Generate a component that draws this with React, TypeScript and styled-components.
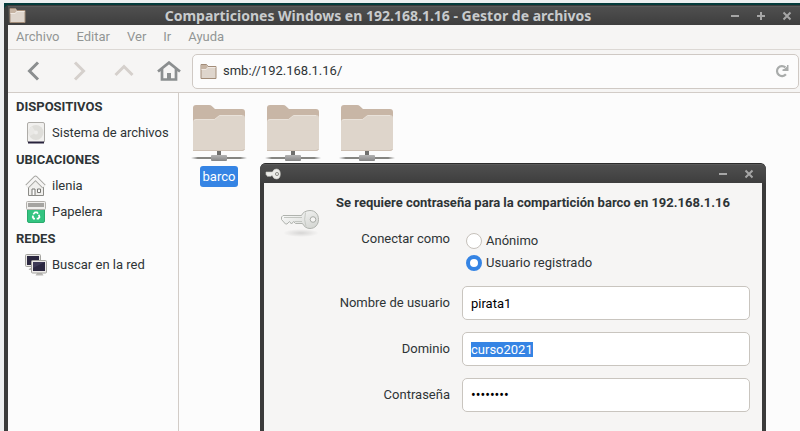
import React, { useEffect, useRef } from "react";
import styled, { createGlobalStyle } from "styled-components";

const GlobalStyle = createGlobalStyle`
  * { box-sizing: border-box; }
  html { background: #edeff0; }
  body {
    margin: 0;
    overflow: hidden;
    font-family: Roboto, "Noto Sans", sans-serif;
    font-size: 13px;
    line-height: 18px;
    color: #2e3436;
  }
  button, input { font: inherit; color: inherit; }
  svg { display: block; flex: none; }
  ::selection { background: #3584e4; color: #ffffff; }
`;

const Screen = styled.div`
  min-height: 100vh;
  display: flex;
  padding: 3px 0 0 4px;
`;

const Desktop = styled.div`
  position: relative;
  flex: 1;
  display: flex;
  padding-top: 2px;
  background: #043b3b;
`;

const FileWindow = styled.section`
  flex: 1;
  display: flex;
  flex-direction: column;
  background: #3b3b3b;
  border-left: 4px solid #3b3b3b;
  border-radius: 5px 0 0 0;
`;

const TitleBar = styled.header<{ $dialog?: boolean }>`
  display: grid;
  grid-template-columns: 24px 1fr 76px;
  align-items: center;
  height: 20px;
  padding: ${(p) => (p.$dialog ? "0 4px" : "0")};
  border-top: 1px solid ${(p) => (p.$dialog ? "#2c2c2c" : "#3a3a3a")};
  border-radius: ${(p) => (p.$dialog ? "5px 5px 0 0" : "0")};
  background: linear-gradient(#666666 0, #4f4f4f 1px, #3e3e3e 100%);
`;

const WindowTitle = styled.h1`
  margin: 0;
  text-align: center;
  white-space: nowrap;
  font: 700 14px/18px "Noto Sans", sans-serif;
  color: #c8cbcd;
`;

const WindowButtons = styled.div`
  grid-column: 3;
  display: flex;
  justify-content: flex-end;
`;

const FrameButton = styled.button`
  display: grid;
  flex: none;
  place-items: center;
  width: 26px;
  height: 18px;
  padding: 0;
  border: 0;
  background: none;
  color: #a6a6a6;
`;

const MenuBar = styled.nav`
  display: flex;
  align-items: center;
  gap: 1px;
  height: 25px;
  background: #f6f5f4;
  border-bottom: 1px solid #dcd8d4;
`;

const MenuButton = styled.button`
  padding: 0 8px;
  border: 0;
  background: none;
  color: #929595;
`;

const Toolbar = styled.div`
  display: flex;
  align-items: center;
  height: 43px;
  padding: 0 1px 0 3px;
  background: #f6f5f4;
  border-bottom: 1px solid #d2ccc7;
`;

const ToolButton = styled.button`
  display: grid;
  place-items: center;
  width: 45px;
  height: 34px;
  padding: 0;
  border: 0;
  background: none;
  color: #8b8e8f;
  &:disabled { color: #d5d0cc; }
`;

const PathBar = styled.div`
  flex: 1;
  display: flex;
  align-items: center;
  gap: 6px;
  height: 35px;
  margin-left: 1px;
  padding: 0 9px 0 7px;
  background: #fcfcfc;
  border: 1px solid #cfc9c4;
  border-radius: 5px;
`;

const PathInput = styled.input`
  flex: 1;
  min-width: 0;
  padding: 0;
  border: 0;
  outline: 0;
  background: none;
`;

const ReloadButton = styled.button`
  padding: 0;
  border: 0;
  background: none;
  color: #a9acab;
`;

const Panes = styled.div`
  flex: 1;
  display: grid;
  grid-template-columns: 171px 1fr;
  background: #fcfcfc;
`;

const Sidebar = styled.aside`
  border-right: 1px solid #d2ccc7;
`;

const GroupTitle = styled.h2`
  margin: 0;
  padding-left: 8px;
  font-size: 13px;
  font-weight: 700;
  line-height: 27px;
`;

const Place = styled.a`
  display: flex;
  align-items: center;
  gap: 5px;
  height: 26px;
  padding-left: 17px;
  white-space: nowrap;
  color: inherit;
  text-decoration: none;
`;

const Files = styled.main`
  display: flex;
  align-items: flex-start;
  padding: 11px 3px;
`;

const Share = styled.a`
  display: flex;
  flex-direction: column;
  align-items: center;
  gap: 4px;
  width: 74px;
  color: inherit;
  text-decoration: none;
`;

const ShareName = styled.span<{ $selected?: boolean }>`
  padding: 0 3px;
  border-radius: 3px;
  line-height: 21px;
  color: ${(p) => (p.$selected ? "#ffffff" : "inherit")};
  background: ${(p) => (p.$selected ? "#3584e4" : "transparent")};
`;

const Dialog = styled.section`
  position: absolute;
  top: 160px;
  right: 34px;
  bottom: 0;
  left: 256px;
  display: flex;
  flex-direction: column;
  overflow: hidden;
  background: #3b3b3b;
  border-radius: 6px 6px 0 0;
`;

const DialogBody = styled.form`
  flex: 1;
  display: flex;
  align-items: flex-start;
  gap: 16px;
  margin: 0 4px;
  padding: 11px 12px 12px 16px;
  background: #f6f5f4;
`;

const KeyPicture = styled.div`
  padding-top: 12px;
`;

const Fields = styled.div`
  flex: 1;
  display: grid;
  grid-template-columns: 114px 1fr;
  gap: 12px;
  align-items: center;
`;

const Question = styled.h2`
  grid-column: 1 / -1;
  margin: 0 0 6px;
  font-size: 13px;
  font-weight: 700;
  line-height: 18px;
  white-space: nowrap;
`;

const FieldLabel = styled.label`
  text-align: right;
  white-space: nowrap;
`;

const GroupLabel = styled.span`
  align-self: start;
  text-align: right;
`;

const Radios = styled.div`
  padding-left: 4px;
`;

const RadioLabel = styled.label`
  display: flex;
  align-items: center;
  gap: 4px;
  height: 22px;
`;

const Radio = styled.input`
  appearance: none;
  width: 16px;
  height: 16px;
  margin: 0;
  border: 1px solid #c6c1bb;
  border-radius: 50%;
  background: #ffffff;
  &:checked { border: 4px solid #3584e4; }
`;

const TextBox = styled.input`
  width: 100%;
  height: 34px;
  padding: 0 8px;
  border: 1px solid #c9c5bf;
  border-radius: 5px;
  outline: 0;
  background: #ffffff;
  color: #000000;
  &[type="password"] { font-size: 14px; }
`;

const Glyph = ({ d }: { d: string }) => (
  <svg width="10" height="10" viewBox="0 0 10 10" aria-hidden="true">
    <path d={d} fill="none" stroke="currentColor" strokeWidth="2" />
  </svg>
);
const MINUS = "M1 5H9";
const PLUS = "M1 5H9M5 1V9";
const CROSS = "M1.5 1.5L8.5 8.5M8.5 1.5L1.5 8.5";

const Chevron = ({ d }: { d: string }) => (
  <svg width="20" height="20" viewBox="0 0 20 20" aria-hidden="true">
    <path d={d} fill="none" stroke="currentColor" strokeWidth="3" />
  </svg>
);

const HomeGlyph = () => (
  <svg width="24" height="20" viewBox="0 0 24 20" aria-hidden="true">
    <path d="M1 10.5L12 1.6L23 10.5M5 8V18.5H19V8" fill="none" stroke="currentColor" strokeWidth="2.7" />
    <path d="M10 12H14V18H10Z" fill="currentColor" />
  </svg>
);

const ReloadGlyph = () => (
  <svg width="14" height="14" viewBox="0 0 14 14" aria-hidden="true">
    <path d="M10.9 10.2A5 5 0 1 1 10.4 3.4" fill="none" stroke="currentColor" strokeWidth="2.2" />
    <path d="M13.5 1V7H7.5V5.5L9.5 4.8L12 2.5V1Z" fill="currentColor" />
  </svg>
);

const SmallFolder = () => (
  <svg width="17" height="17" viewBox="0 0 17 17" aria-hidden="true">
    <path d="M1 15.5V1.5H6.5L8 3.5H16V15.5Z" fill="#ded5cc" stroke="#a28c78" />
    <path d="M1.5 2H6.3L7.5 4L6 6H1.5Z" fill="#c6b4a3" />
    <path d="M1.5 6.5H6.2L8 4.5H15.5" fill="none" stroke="#f0e9e2" />
  </svg>
);

const ShareFolder = () => (
  <svg width="58" height="58" viewBox="0 0 58 58" aria-hidden="true">
    <defs>
      <linearGradient id="net" x1="0" x2="1">
        <stop offset="0" stopColor="#8c8c8c" stopOpacity="0" />
        <stop offset=".12" stopColor="#858581" />
        <stop offset=".88" stopColor="#858581" />
        <stop offset="1" stopColor="#8c8c8c" stopOpacity="0" />
      </linearGradient>
      <linearGradient id="plug" x2="0" y2="1">
        <stop offset="0" stopColor="#b4b4b4" />
        <stop offset="1" stopColor="#858585" />
      </linearGradient>
    </defs>
    <path d="M3 46V4Q3 1 6 1H19Q21 1 22 2.2L25 5H52Q55 5 55 8V40Z" fill="#c8b6a6" />
    <path d="M3 47V18Q3 15 6 15H24Q25.500 15 26.500 14L29 11.700Q30 11 32 11H52Q55 11 55 14V44Q55 47 52 47Z" fill="#ded5cb" />
    <path d="M3 46.500H52Q54 46.500 54.500 45" fill="none" stroke="#cdc0b3" />
    <path d="M4 16.500L6 15.500H24.500L29.500 11.500H52" fill="none" stroke="#e9e2da" />
    <rect x="27" y="47" width="4" height="5" fill="#70706e" />
    <rect x="1" y="53" width="56" height="2" fill="url(#net)" />
    <rect x="21" y="51" width="16" height="6" rx="1" fill="url(#plug)" />
  </svg>
);

const DriveIcon = () => (
  <svg width="22" height="22" viewBox="0 0 22 22" aria-hidden="true">
    <rect x="2.5" y="0.5" width="17" height="20" rx="1.500" fill="#f1f0ee" stroke="#aeaca8" />
    <circle cx="11" cy="10.500" r="7.500" fill="#dfdeda" />
    <path d="M11 10.500L4.500 14.300A7.500 7.500 0 0 1 7 4.200Z" fill="#e9e8e5" />
    <circle cx="11" cy="10.500" r="2" fill="#eeedeb" />
    <path d="M3 19.500H19V21.500H3Z" fill="#28233c" />
  </svg>
);

const UserHomeIcon = () => (
  <svg width="22" height="22" viewBox="0 0 22 22" aria-hidden="true">
    <path d="M3.500 10V20.500H18.500V10L11 4Z" fill="#f0efed" stroke="#8b8b87" />
    <path d="M7 20V14H10V20M12.500 17.500V14H15.500V17.500Z" fill="#fff" stroke="#777773" />
    <path d="M2 11.500L10.500 3L19 11.500" fill="none" stroke="#a5a5a1" strokeWidth="4.600" strokeLinejoin="round" />
    <path d="M2 11.500L10.500 3L19 11.500" fill="none" stroke="#f6f5f4" strokeWidth="3" strokeLinejoin="round" />
  </svg>
);

const TrashIcon = () => (
  <svg width="22" height="22" viewBox="0 0 22 22" aria-hidden="true">
    <path d="M2.500 5H19.500V20Q19.500 21.500 18 21.500H4Q2.500 21.500 2.500 20Z" fill="#33c481" stroke="#2bab6d" />
    <rect x="1.500" y="0.500" width="19" height="8" rx="1" fill="#efeeec" stroke="#b2b0ac" />
    <rect x="3" y="2" width="16" height="4" fill="#a5a4a1" />
    <path d="M8.300 13.300L10 11.300H12L13 12.700M13.800 13.700L14.500 16L13.300 17.600H11.700M10 17.600H8.600L7.700 16L8.300 14.600" fill="none" stroke="#fff" strokeWidth="1.700" />
  </svg>
);

const NetworkIcon = () => (
  <svg width="22" height="22" viewBox="0 0 22 22" aria-hidden="true">
    <path d="M5 14H10V16H3.500Z" fill="#b9b8b5" />
    <rect x="0.500" y="0.500" width="15" height="12" rx="1" fill="#e9e8e5" stroke="#a5a4a0" />
    <rect x="2" y="2" width="12" height="9" fill="#2b2740" />
    <path d="M12 19H17L18.500 21.500H10.500Z" fill="#b9b8b5" />
    <rect x="6.500" y="6.500" width="15" height="12.500" rx="1" fill="#eceae8" stroke="#a5a4a0" />
    <rect x="8" y="8" width="12" height="9" fill="#2b2740" />
    <path d="M8 8H20L8 14Z" fill="#3d3955" />
  </svg>
);

const KeyIcon = () => (
  <svg width="40" height="32" viewBox="0 0 40 32" aria-hidden="true">
    <defs>
      <linearGradient id="metal" x1="0" y1="0" x2="1" y2="1">
        <stop offset="0" stopColor="#ffffff" />
        <stop offset="1" stopColor="#d0d2ce" />
      </linearGradient>
      <radialGradient id="shade">
        <stop offset="0" stopColor="#000" stopOpacity=".13" />
        <stop offset="1" stopColor="#000" stopOpacity="0" />
      </radialGradient>
    </defs>
    <ellipse cx="21" cy="27" rx="18" ry="4" fill="url(#shade)" />
    <path d="M3 9.500H21.500C22.500 6.500 26 4.500 30 4.500C35 4.500 38.500 8 38.500 13.500C38.500 18.500 35 22.500 30 22.500C26.500 22.500 24 20.500 22.500 17.500H15.500L13.500 15.500L11.500 18L9.500 15.500L7 18H5.500L1.500 13.500V11Z" fill="url(#metal)" stroke="#b0b3ae" />
    <path d="M4 11.500H22M14.500 15.500H22" stroke="#c2c5c0" fill="none" />
    <path d="M25.500 6.500Q23.500 13.500 26 20.500" fill="none" stroke="#c6c9c4" />
    <circle cx="33" cy="13.500" r="2.800" fill="#f6f5f4" stroke="#a9aca7" />
  </svg>
);

const TitleKey = () => (
  <svg width="16" height="12" viewBox="0 0 16 12" aria-hidden="true">
    <path d="M1 4H7.500Q8.500 1 11.300 1Q15.300 1 15.300 6Q15.300 11 11.300 11Q8.500 11 7.500 7.800H6L5 8.800L4 7.800L3 8.800L1 6.500Z" fill="#ecece9" stroke="#c9c9c5" strokeWidth=".6" />
    <circle cx="12" cy="6" r="1.600" fill="#e4e4e0" stroke="#8a8a86" strokeWidth=".9" />
  </svg>
);

const TitleIcon = styled.span`
  justify-self: start;
  margin-left: 1px;
`;

const places = [
  { title: "DISPOSITIVOS", items: [{ name: "Sistema de archivos", Icon: DriveIcon }] },
  {
    title: "UBICACIONES",
    items: [
      { name: "ilenia", Icon: UserHomeIcon },
      { name: "Papelera", Icon: TrashIcon },
    ],
  },
  { title: "REDES", items: [{ name: "Buscar en la red", Icon: NetworkIcon }] },
];

export default function App() {
  const domain = useRef<HTMLInputElement>(null);

  useEffect(() => {
    domain.current?.focus();
    domain.current?.select();
  }, []);

  return (
    <Screen>
      <GlobalStyle />
      <Desktop>
        <FileWindow>
          <TitleBar>
            <TitleIcon><SmallFolder /></TitleIcon>
            <WindowTitle>Comparticiones Windows en 192.168.1.16 - Gestor de archivos</WindowTitle>
            <WindowButtons>
              <FrameButton aria-label="Minimizar"><Glyph d={MINUS} /></FrameButton>
              <FrameButton aria-label="Maximizar"><Glyph d={PLUS} /></FrameButton>
              <FrameButton aria-label="Cerrar"><Glyph d={CROSS} /></FrameButton>
            </WindowButtons>
          </TitleBar>
          <MenuBar>
            {["Archivo", "Editar", "Ver", "Ir", "Ayuda"].map((m) => (
              <MenuButton key={m}>{m}</MenuButton>
            ))}
          </MenuBar>
          <Toolbar>
            <ToolButton aria-label="Atrás"><Chevron d="M14 1.500L5.500 10L14 18.500" /></ToolButton>
            <ToolButton aria-label="Adelante" disabled><Chevron d="M6 1.500L14.500 10L6 18.500" /></ToolButton>
            <ToolButton aria-label="Subir" disabled><Chevron d="M1.500 14L10 5.500L18.500 14" /></ToolButton>
            <ToolButton aria-label="Carpeta personal"><HomeGlyph /></ToolButton>
            <PathBar>
              <SmallFolder />
              <PathInput aria-label="Ubicación" defaultValue="smb://192.168.1.16/" />
              <ReloadButton aria-label="Recargar"><ReloadGlyph /></ReloadButton>
            </PathBar>
          </Toolbar>
          <Panes>
            <Sidebar>
              {places.map((group) => (
                <React.Fragment key={group.title}>
                  <GroupTitle>{group.title}</GroupTitle>
                  {group.items.map(({ name, Icon }) => (
                    <Place key={name} href="#"><Icon />{name}</Place>
                  ))}
                </React.Fragment>
              ))}
            </Sidebar>
            <Files>
              <Share href="#"><ShareFolder /><ShareName $selected>barco</ShareName></Share>
              <Share href="#" aria-label="Carpeta compartida 2"><ShareFolder /></Share>
              <Share href="#" aria-label="Carpeta compartida 3"><ShareFolder /></Share>
            </Files>
          </Panes>
        </FileWindow>

        <Dialog role="dialog" aria-labelledby="question">
          <TitleBar $dialog>
            <TitleIcon><TitleKey /></TitleIcon>
            <WindowButtons>
              <FrameButton aria-label="Minimizar"><Glyph d={MINUS} /></FrameButton>
              <FrameButton aria-label="Cerrar"><Glyph d={CROSS} /></FrameButton>
            </WindowButtons>
          </TitleBar>
          <DialogBody>
            <KeyPicture><KeyIcon /></KeyPicture>
            <Fields>
              <Question id="question">Se requiere contraseña para la compartición barco en 192.168.1.16</Question>
              <GroupLabel id="connect">Conectar como</GroupLabel>
              <Radios role="radiogroup" aria-labelledby="connect">
                <RadioLabel><Radio type="radio" name="as" />Anónimo</RadioLabel>
                <RadioLabel><Radio type="radio" name="as" defaultChecked />Usuario registrado</RadioLabel>
              </Radios>
              <FieldLabel htmlFor="user">Nombre de usuario</FieldLabel>
              <TextBox id="user" defaultValue="pirata1" />
              <FieldLabel htmlFor="domain">Dominio</FieldLabel>
              <TextBox id="domain" ref={domain} defaultValue="curso2021" />
              <FieldLabel htmlFor="password">Contraseña</FieldLabel>
              <TextBox id="password" type="password" defaultValue="password" />
            </Fields>
          </DialogBody>
        </Dialog>
      </Desktop>
    </Screen>
  );
}
